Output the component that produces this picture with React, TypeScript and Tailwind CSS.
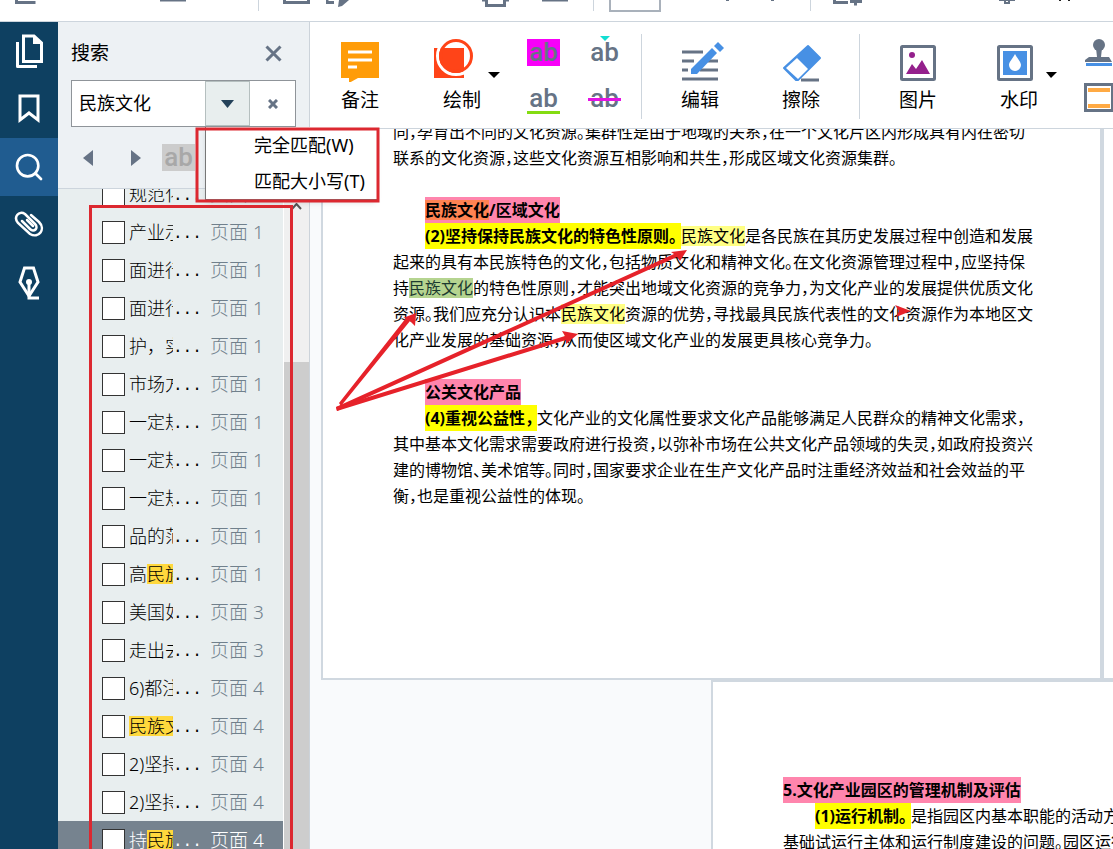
import type { ReactNode } from 'react';
import { Search } from 'lucide-react';

type Result = { text: string; mark?: string; page: number };

const results: Result[] = [
  { text: '规范化', page: 1 },
  { text: '产业示', page: 1 },
  { text: '面进行', page: 1 },
  { text: '面进行', page: 1 },
  { text: '护，实', page: 1 },
  { text: '市场方', page: 1 },
  { text: '一定规', page: 1 },
  { text: '一定规', page: 1 },
  { text: '一定规', page: 1 },
  { text: '品的范', page: 1 },
  { text: '高', mark: '民族', page: 1 },
  { text: '美国如', page: 3 },
  { text: '走出去', page: 3 },
  { text: '6)都注', page: 4 },
  { text: '', mark: '民族文', page: 4 },
  { text: '2)坚持', page: 4 },
  { text: '2)坚持', page: 4 },
  { text: '持', mark: '民族', page: 4 },
];

function TopStrip() {
  return (
    <header className="flex h-[22px] shrink-0 items-start overflow-hidden border-b border-[#cdd5dd] bg-white">
      <svg className="ml-[15px] shrink-0" width="22" height="5">
        <path d="M1.5 0V2.5H20.5" fill="none" stroke="#667385" strokeWidth="3" />
      </svg>
      <svg className="ml-[123px] shrink-0" width="26" height="2">
        <path d="M0 0H26" stroke="#667385" strokeWidth="3" />
      </svg>
      <span className="ml-[72px] h-[11px] w-px shrink-0 bg-[#cdd5dd]" />
      <svg className="ml-6 shrink-0" width="27" height="5">
        <path d="M1.5 0V2.5H25.5V0" fill="none" stroke="#667385" strokeWidth="3" />
      </svg>
      <svg className="ml-4 shrink-0" width="24" height="8">
        <path d="M1 0V2.5H8" fill="none" stroke="#667385" strokeWidth="3" />
        <path d="M13 0L12 7L16 6L23 0Z" fill="#667385" />
      </svg>
      <svg className="ml-[132px] shrink-0" width="27" height="8">
        <path d="M0 0H5M22 0H27M4.5 0V5.5H22.5V0" fill="none" stroke="#667385" strokeWidth="3" />
      </svg>
      <svg className="ml-[33px] shrink-0" width="26" height="2">
        <path d="M0 0H26" stroke="#667385" strokeWidth="3" />
      </svg>
      <span className="ml-[25px] h-[11px] w-px shrink-0 bg-[#cdd5dd]" />
      <span className="ml-[15px] h-3 w-[52px] shrink-0 border-x-2 border-b-2 border-[#a9b1bb]" />
      <svg className="ml-[64px] shrink-0" width="50" height="2">
        <path d="M1 0H4M46 0H49" stroke="#667385" strokeWidth="2" />
      </svg>
      <span className="ml-[35px] h-[11px] w-px shrink-0 bg-[#cdd5dd]" />
      <svg className="ml-[22px] shrink-0" width="30" height="6">
        <path d="M1.5 0V2.5H15M17 1.5H29M22.5 0V5.5" fill="none" stroke="#667385" strokeWidth="3" />
      </svg>
      <svg className="ml-[136px] shrink-0" width="16" height="4">
        <path d="M0 0H16M6 0V3H10V0" fill="none" stroke="#667385" strokeWidth="2" />
      </svg>
      <svg className="ml-[44px] shrink-0" width="12" height="2">
        <path d="M0 0H2M9 0H11" stroke="#222" strokeWidth="2" />
      </svg>
    </header>
  );
}

function RailButton({ label, active, children }: { label: string; active?: boolean; children: ReactNode }) {
  return (
    <button
      aria-label={label}
      className={
        active
          ? 'flex h-[58px] w-full items-center justify-center bg-[#205c90]'
          : 'flex h-[58px] w-full items-center justify-center'
      }
    >
      {children}
    </button>
  );
}

function Rail() {
  return (
    <nav className="flex w-[58px] shrink-0 flex-col bg-[#0e4061] text-white">
      <RailButton label="页面">
        <svg width="28" height="34" viewBox="0 0 28 34" fill="none" stroke="white" strokeWidth="3">
          <path d="M8.5 2H19L26.5 9V27.5H8.5Z" />
          <path d="M18 1V10H27Z" fill="white" stroke="none" />
          <path d="M2.5 8V32.5H22" strokeLinejoin="round" />
        </svg>
      </RailButton>
      <RailButton label="书签">
        <svg width="24" height="30" viewBox="0 0 24 30" fill="none" stroke="white" strokeWidth="3">
          <path d="M3 2H21V26L12 19L3 26Z" />
        </svg>
      </RailButton>
      <RailButton label="搜索" active>
        <Search size={32} strokeWidth={2} />
      </RailButton>
      <RailButton label="附件">
        <svg width="30" height="28" viewBox="0 0 30 28" fill="none" stroke="white" strokeWidth="2.5" strokeLinecap="round">
          <path d="M17 4L25 11C32 18 25 28 16 23L4 12C-1 6 5 -1 11 3L21 13C25 17 20 22 16 18L8 10" />
          <path d="M13 9L19 15" />
        </svg>
      </RailButton>
      <RailButton label="签名">
        <svg width="24" height="34" viewBox="0 0 24 34" fill="none" stroke="white" strokeWidth="3">
          <path d="M7.5 2H16.5L21 16L12 30L3 16Z" />
          <path d="M12 16V32H22" />
          <circle cx="12" cy="16" r="3" fill="white" stroke="none" />
        </svg>
      </RailButton>
    </nav>
  );
}

function SearchPanel() {
  return (
    <aside className="relative z-10 flex w-[252px] shrink-0 flex-col border-r border-[#ccd3da] bg-[#edf1f4]">
      <div className="flex h-[58px] items-center justify-between pr-[27px] pl-[13px] pt-1">
        <h2 className="text-[19px]">搜索</h2>
        <button aria-label="关闭">
          <svg width="17" height="17" viewBox="0 0 17 17" stroke="#667385" strokeWidth="3">
            <path d="M1.5 1.5L15.5 15.5M15.5 1.5L1.5 15.5" />
          </svg>
        </button>
      </div>
      <div className="relative z-10 mx-[13px] flex h-[47px] shrink-0 border border-[#8f9499] bg-white">
        <input
          aria-label="搜索内容"
          defaultValue="民族文化"
          className="w-[133px] pl-[7px] text-[18px] outline-none"
        />
        <button aria-label="搜索选项" className="flex w-[45px] items-center justify-center border border-[#b5bfbf] bg-[#e8eeee]">
          <svg width="13" height="8">
            <path d="M0 0H13L6.5 8Z" fill="#24425a" />
          </svg>
        </button>
        <button aria-label="清除" className="flex flex-1 items-center justify-center">
          <svg width="10" height="10" viewBox="0 0 10 10" stroke="#667385" strokeWidth="3">
            <path d="M1 1L9 9M9 1L1 9" />
          </svg>
        </button>
        <div className="absolute top-[46px] left-[133px] flex w-[172px] flex-col border-b border-l border-[#777] bg-white text-[18px] shadow-md">
          <button className="h-9 pl-12 text-left whitespace-nowrap">完全匹配(W)</button>
          <button className="h-9 pl-12 text-left whitespace-nowrap">匹配大小写(T)</button>
        </div>
      </div>
      <div className="flex h-[62px] shrink-0 items-center border-b border-[#cdd5dd] pl-[25px]">
        <button aria-label="上一个">
          <svg width="10" height="16">
            <path d="M10 0V16L0 8Z" fill="#667385" />
          </svg>
        </button>
        <button aria-label="下一个" className="ml-[38px]">
          <svg width="10" height="16">
            <path d="M0 0V16L10 8Z" fill="#667385" />
          </svg>
        </button>
        <button
          className="ml-[21px] flex h-[27px] w-[33px] items-center justify-center bg-[#cccccc] font-[Roboto,sans-serif] text-[26px] font-medium text-[#a8a8a8]"
          disabled
        >
          ab
        </button>
      </div>
      <div className="flex min-h-0 flex-1">
        <ul className="-mt-[14px] flex-1 bg-[#e8eeef] [clip-path:inset(14px_0_0_0)]">
          {results.map((r, i) => {
            const selected = i === results.length - 1;
            return (
              <li key={i} className={selected ? 'bg-[#76838f] text-white' : 'text-black'}>
                <label className="flex h-[38px] items-center pl-11">
                  <input type="checkbox" className="size-[23px] shrink-0 appearance-none border border-[#333] bg-white" />
                  <span className="ml-1 w-[44px] shrink-0 overflow-hidden text-[18px] leading-5 font-light whitespace-nowrap">
                    {r.text}
                    {r.mark && <mark className="inline-block bg-[#ffd83d] leading-5 text-black">{r.mark}</mark>}
                  </span>
                  <span className="w-[37px] pt-1 font-['Liberation_Mono',monospace] text-base">...</span>
                  <span className={selected ? 'text-[19px] font-light text-white' : 'text-[19px] font-light text-[#70808c]'}>
                    页面 {r.page}
                  </span>
                </label>
              </li>
            );
          })}
        </ul>
        <div className="flex w-[26px] flex-col items-center border-l border-white bg-[#f0f0f0] pt-[14px]">
          <svg width="11" height="7">
            <path d="M1 6L5.5 1L10 6" fill="none" stroke="#555" strokeWidth="2" />
          </svg>
          <div className="mt-[152px] w-full flex-1 bg-[#cdcdcd]" />
        </div>
      </div>
    </aside>
  );
}

function Tool({ label, wide, gap, children }: { label: string; wide?: boolean; gap: string; children: ReactNode }) {
  return (
    <button className={`flex shrink-0 flex-col items-center gap-1 ${wide ? 'w-[76px]' : 'w-[60px]'} ${gap}`}>
      <svg className="h-11 w-full" fill="none">
        {children}
      </svg>
      <span className="text-[19px] leading-7">{label}</span>
    </button>
  );
}

function Toolbar() {
  return (
    <div className="flex h-[107px] shrink-0 overflow-hidden border-b border-[#cdd5dd] bg-white pt-4">
      <Tool label="备注" gap="ml-[20px]">
        <path d="M11 4H49V40H28L19 45V40H11Z" fill="#ff9c08" />
        <path d="M18 14H42M18 22H42M18 29H27" stroke="white" strokeWidth="3" />
      </Tool>
      <Tool label="绘制" wide gap="ml-[34px]">
        <rect x="10" y="10" width="30" height="30" fill="#ff4418" />
        <circle cx="32" cy="18" r="18.5" stroke="white" strokeWidth="3" />
        <circle cx="32" cy="18" r="15.5" stroke="#ff4418" strokeWidth="3" />
        <path d="M64 34H76L70 40Z" fill="black" />
      </Tool>
      <div className="ml-[27px] grid h-fit shrink-0 grid-cols-[33px_33px] gap-x-7 gap-y-[20px] font-[Roboto,sans-serif] text-[26px] leading-[27px] font-medium text-[#667385]">
        <button className="mt-px h-[27px] bg-[#f800f8]">ab</button>
        <button className="relative mt-px h-[27px]">
          ab
          <svg className="absolute -top-[3px] left-3" width="10" height="6">
            <path d="M0 0H10L5 5Z" fill="#12ded2" />
          </svg>
        </button>
        <button className="h-[28px] border-b-3 border-[#84dc12] leading-[23px]">ab</button>
        <button className="relative h-[28px] pb-[3px] leading-[23px]">
          ab
          <span className="absolute top-3 left-0 h-[3px] w-full bg-[#e412e4]" />
        </button>
      </div>
      <span className="-mt-1 ml-5 h-[85px] w-px shrink-0 bg-[#cdd5dd]" />
      <Tool label="编辑" gap="ml-[28px]">
        <path d="M12 14H33M12 23H24M12 32H18M30 32H48M38 23H48M12 41H48" stroke="#667385" strokeWidth="3" />
        <path d="M21 31L42 10L47 15L27 36H21Z" fill="#4790e4" />
        <path d="M44 8L48 4L54 10L50 14Z" fill="#4790e4" />
      </Tool>
      <Tool label="擦除" gap="ml-[41px]">
        <path d="M37 8L49 20L27 42H25L13 30Z" fill="#4790e4" stroke="#4790e4" strokeWidth="2" strokeLinejoin="round" />
        <path d="M26 20L37 31L27 41L15 30Z" fill="white" />
        <path d="M30 42H48" stroke="#667385" strokeWidth="3" />
      </Tool>
      <span className="-mt-1 ml-7 h-[85px] w-px shrink-0 bg-[#cdd5dd]" />
      <Tool label="图片" gap="ml-7">
        <rect x="13.5" y="8.5" width="33" height="33" rx="1" stroke="#667385" strokeWidth="3" />
        <circle cx="24" cy="17" r="3" fill="#94208c" />
        <path d="M18 36L24 26L28 31L34 22L42 36Z" fill="#94208c" />
      </Tool>
      <Tool label="水印" wide gap="ml-[33px]">
        <rect x="17.5" y="8.5" width="33" height="33" rx="1" stroke="#667385" strokeWidth="3" />
        <rect x="22" y="13" width="24" height="24" fill="#4790e4" />
        <path d="M34 16C36 20 40 24 40 27A6 6 0 0 1 28 27C28 24 32 20 34 16Z" fill="white" />
        <path d="M65 34H76L70 40Z" fill="black" />
      </Tool>
      <div className="ml-[27px] flex shrink-0 flex-col gap-4">
        <button aria-label="图章">
          <svg width="30" height="29">
            <circle cx="15" cy="7" r="6" fill="#667385" />
            <path d="M12 10H18L17 19H25L28 24H1V22L5 19H13Z" fill="#667385" />
            <path d="M2 26.5H28" stroke="#4790e4" strokeWidth="3" />
          </svg>
        </button>
        <button aria-label="页眉页脚">
          <svg width="30" height="30">
            <rect x="1.5" y="1.5" width="27" height="26" fill="none" stroke="#667385" strokeWidth="3" />
            <path d="M4 7H26M4 23H26" stroke="#ffaa44" strokeWidth="4" />
          </svg>
        </button>
      </div>
    </div>
  );
}

function Heading({ children }: { children: ReactNode }) {
  return <strong className="inline-block bg-[#ff85ad]">{children}</strong>;
}

function Lead({ children }: { children: ReactNode }) {
  return <strong className="inline-block bg-[#ffff00] pr-1">{children}</strong>;
}

function Hit({ current }: { current?: boolean }) {
  return (
    <mark className={current ? 'inline-block bg-[#b5d490] leading-5 text-[#1c3a30]' : 'inline-block bg-[#ffff84] leading-5'}>
      民族文化
    </mark>
  );
}

function Document() {
  return (
    <div className="min-h-0 flex-1 overflow-hidden bg-[#f9fafc] text-base leading-[26px] whitespace-nowrap [font-feature-settings:'halt']">
      <div className="-mt-[10px] ml-[11px] flex">
        <article className="w-[781px] shrink-0 border-2 border-t-0 border-[#d0d8e0] bg-white pb-[169px] pl-[70px]">
          <p>
            同，孕育出不同的文化资源。集群性是由于地域的关系，在一个文化片区内形成具有内在密切
            <br />
            联系的文化资源，这些文化资源互相影响和共生，形成区域文化资源集群。
          </p>
          <h3 className="mt-[26px] pl-8">
            <Heading>
              <mark className="inline-block bg-[#ff8352] leading-5">民族文化</mark>/区域文化
            </Heading>
          </h3>
          <p className="indent-8 [&>*]:indent-0">
            <Lead>(2)坚持保持民族文化的特色性原则。</Lead>
            <Hit />
            是各民族在其历史发展过程中创造和发展
            <br />
            起来的具有本民族特色的文化，包括物质文化和精神文化。在文化资源管理过程中，应坚持保
            <br />
            持
            <Hit current />
            的特色性原则，才能突出地域文化资源的竞争力，为文化产业的发展提供优质文化
            <br />
            资源。我们应充分认识本
            <Hit />
            资源的优势，寻找最具民族代表性的文化资源作为本地区文
            <br />
            化产业发展的基础资源，从而使区域文化产业的发展更具核心竞争力。
          </p>
          <h3 className="mt-[26px] pl-8">
            <Heading>公关文化产品</Heading>
          </h3>
          <p className="indent-8 [&>*]:indent-0">
            <Lead>(4)重视公益性，</Lead>
            文化产业的文化属性要求文化产品能够满足人民群众的精神文化需求，
            <br />
            其中基本文化需求需要政府进行投资，以弥补市场在公共文化产品领域的失灵，如政府投资兴
            <br />
            建的博物馆、美术馆等。同时，国家要求企业在生产文化产品时注重经济效益和社会效益的平
            <br />
            衡，也是重视公益性的体现。
          </p>
        </article>
        <div className="flex-1 border-b-2 border-l-2 border-[#d0d8e0] bg-white" />
      </div>
      <article className="ml-[401px] h-full border-t-2 border-l-2 border-[#d0d8e0] bg-white pt-[95px] pl-[70px]">
        <h3>
          <Heading>5.文化产业园区的管理机制及评估</Heading>
        </h3>
        <p className="indent-8 [&>*]:indent-0">
          <Lead>(1)运行机制。</Lead>
          是指园区内基本职能的活动方式
          <br />
          基础试运行主体和运行制度建设的问题。园区运行
        </p>
      </article>
    </div>
  );
}

function Annotations() {
  return (
    <svg className="pointer-events-none absolute inset-0 z-20 h-full w-full" fill="none">
      <rect x="197" y="129" width="181" height="72" stroke="#dc2830" strokeWidth="3" />
      <rect x="90.5" y="206.5" width="201" height="700" stroke="#dc2830" strokeWidth="3" />
      <g fill="#e6222a">
        <path d="M339 403L406 318L403 318L416 313L415 326L410 321L341 406Z" />
        <path d="M336 407L674 254L671 252L687 250L680 261L677 257L337 411Z" />
        <path d="M336 407L565 336L562 331L578 334L566 344L566 340L337 411Z" />
        <path d="M895 305L911 311L896 317L899 311Z" />
      </g>
    </svg>
  );
}

export default function App() {
  return (
    <div className="relative flex h-screen flex-col overflow-hidden bg-white font-['Noto_Sans','Noto_Sans_CJK_SC',sans-serif] text-black">
      <TopStrip />
      <div className="flex min-h-0 flex-1">
        <Rail />
        <SearchPanel />
        <main className="flex min-w-0 flex-1 flex-col">
          <Toolbar />
          <Document />
        </main>
      </div>
      <Annotations />
    </div>
  );
}
